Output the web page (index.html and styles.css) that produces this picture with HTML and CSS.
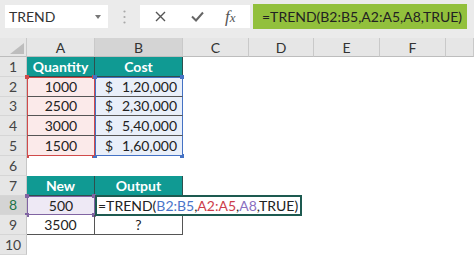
FILE: index.html
```html
<!DOCTYPE html>
<html>
<head>
<meta charset="utf-8">
<link rel="stylesheet" href="styles.css">
</head>
<body>
<div class="app">
  <div class="toolbar">
    <div class="namebox">
      <span>TREND</span>
      <svg class="caret" width="6" height="4" viewBox="0 0 6 4"><path d="M0 0h6L3 4z" fill="#777"/></svg>
    </div>
    <div class="grip">
      <svg width="3" height="14" viewBox="0 0 3 14"><circle cx="1.5" cy="1.5" r="1.1" fill="#a8a8a8"/><circle cx="1.5" cy="7" r="1.1" fill="#a8a8a8"/><circle cx="1.5" cy="12.5" r="1.1" fill="#a8a8a8"/></svg>
    </div>
    <div class="fxbox">
      <svg class="ico-x" width="11" height="11" viewBox="0 0 11 11"><path d="M1 1l9 9M10 1l-9 9" stroke="#555" stroke-width="1.4" fill="none"/></svg>
      <svg class="ico-ok" width="13" height="11" viewBox="0 0 13 11"><path d="M1 5.5l4 4L12 1.5" stroke="#666" stroke-width="2" fill="none"/></svg>
      <span class="fx">f<span class="fxx">x</span></span>
    </div>
    <div class="formula">=TREND(B2:B5,A2:A5,A8,TRUE)</div>
  </div>

  <div class="sheet">
    <div class="corner"><svg width="14" height="11" viewBox="0 0 14 11"><path d="M14 0v11H0z" fill="#bdbdbd"/></svg></div>
    <div class="ch">A</div>
    <div class="ch sel">B</div>
    <div class="ch">C</div>
    <div class="ch">D</div>
    <div class="ch">E</div>
    <div class="ch">F</div>
    <div class="ch"></div>

    <div class="rh">1</div>
    <div class="teal">Quantity</div>
    <div class="teal">Cost</div>
    <div></div><div></div><div></div><div></div><div></div>

    <div class="rh">2</div>
    <div class="ra top">1000</div>
    <div class="rb top"><span>$</span><span>1,20,000</span></div>
    <div></div><div></div><div></div><div></div><div></div>

    <div class="rh">3</div>
    <div class="ra">2500</div>
    <div class="rb"><span>$</span><span>2,30,000</span></div>
    <div></div><div></div><div></div><div></div><div></div>

    <div class="rh">4</div>
    <div class="ra">3000</div>
    <div class="rb"><span>$</span><span>5,40,000</span></div>
    <div></div><div></div><div></div><div></div><div></div>

    <div class="rh">5</div>
    <div class="ra last">1500</div>
    <div class="rb last"><span>$</span><span>1,60,000</span></div>
    <div></div><div></div><div></div><div></div><div></div>

    <div class="rh">6</div>
    <div></div><div></div><div></div><div></div><div></div><div></div><div></div>

    <div class="rh">7</div>
    <div class="teal">New</div>
    <div class="teal">Output</div>
    <div></div><div></div><div></div><div></div><div></div>

    <div class="rh sel">8</div>
    <div class="rp">500</div>
    <div class="edit"><div class="editbox">=TREND(<span class="cb">B2:B5</span>,<span class="cr">A2:A5</span>,<span class="cp">A8</span>,TRUE)</div></div>
    <div></div><div></div><div></div>

    <div class="rh">9</div>
    <div class="plain">3500</div>
    <div class="plain">?</div>
    <div></div><div></div><div></div><div></div><div></div>

    <div class="rh">10</div>
    <div></div><div></div><div></div><div></div><div></div><div></div><div></div>
  </div>
</div>
</body>
</html>
```

FILE: styles.css
```css
html, body {
  margin: 0;
  padding: 0;
  background: #fff;
}
body {
  width: 474px;
  height: 255px;
  overflow: hidden;
  font-family: Lato, "Open Sans", sans-serif;
  color: #222;
}
.toolbar {
  display: flex;
  align-items: flex-start;
  height: 38px;
  box-sizing: border-box;
  padding: 5px 0 0 5px;
  background: #ebebeb;
}
.namebox {
  width: 103px;
  height: 23px;
  box-sizing: border-box;
  background: #fff;
  display: flex;
  align-items: center;
  justify-content: space-between;
  padding: 0 7px 0 4px;
  font-size: 14px;
  color: #333;
}
.caret { margin-top: 1px; }
.grip {
  width: 32px;
  display: flex;
  justify-content: center;
  padding-top: 5px;
}
.fxbox {
  width: 110px;
  height: 23px;
  background: #fff;
  display: flex;
  align-items: center;
}
.ico-x { margin-left: 15px; }
.ico-ok { margin-left: 25px; }
.fx {
  margin-left: 21px;
  font-family: "Liberation Serif", serif;
  font-style: italic;
  font-size: 17px;
  color: #555;
}
.fxx { font-size: 13px; }
.formula {
  margin-left: 3px;
  margin-top: -1px;
  width: 214px;
  height: 25px;
  box-sizing: border-box;
  padding-left: 9px;
  background: #92c03c;
  font-size: 14px;
  line-height: 25px;
  color: #222;
  white-space: nowrap;
}

.sheet {
  display: grid;
  grid-template-columns: 27px 68px 88px 66px 65px 66px 66px 1fr;
  grid-template-rows: 19px repeat(10, 19.8px);
  font-size: 14px;
}
.sheet > div {
  box-sizing: border-box;
  display: flex;
  align-items: center;
  justify-content: center;
  white-space: nowrap;
  position: relative;
}
.corner {
  background: #e6e6e6;
  border-right: 1px solid #c9c9c9;
  border-bottom: 1px solid #bdbdbd;
  align-items: flex-end !important;
  justify-content: flex-end !important;
  padding: 0 2px 2px 0;
}
.ch {
  background: #e6e6e6;
  border-right: 1px solid #c9c9c9;
  border-bottom: 1px solid #bdbdbd;
  color: #333;
}
.ch.sel { background: #d4d4d4; }
.rh {
  background: #e6e6e6;
  border-right: 1px solid #c6c6c6;
  border-bottom: 1px solid #d6d6d6;
  color: #444;
}
.rh.sel {
  background: #d4d4d4;
  color: #217346;
}
.teal {
  background: #109a93;
  color: #fff;
  font-weight: 700;
  border-right: 1px solid #2f4f4d;
  border-bottom: 1px solid #2f4f4d;
}
.ra {
  background: #fbeaea;
  border-left: 1px solid #d04a4a;
  border-right: 1px solid #d04a4a;
  border-bottom: 1px solid #555;
}
.rb {
  background: #e9eff9;
  border-left: 1px solid #4472c4;
  border-right: 1px solid #4472c4;
  border-bottom: 1px solid #555;
  justify-content: space-between !important;
  padding: 0 5px 0 9px;
}
.ra.top { border-top: 1px solid #d04a4a; }
.rb.top { border-top: 1px solid #4472c4; }
.ra.last { border-bottom: 1px solid #d04a4a; }
.rb.last { border-bottom: 1px solid #4472c4; }

.ra.top::after, .rb.top::after, .rp::after {
  content: "";
  position: absolute;
  top: -3px;
  left: -3px;
  width: 4px;
  height: 4px;
}
.ra.top::after {
  background: #d04a4a;
  box-shadow: 67px 0 #d04a4a, 0 79px #d04a4a, 67px 79px #d04a4a;
}
.rb.top::after {
  background: #4472c4;
  box-shadow: 87px 0 #4472c4, 0 79px #4472c4, 87px 79px #4472c4;
}
.rp {
  background: #eee9f5;
  border: 1px solid #8064a2;
}
.rp::after {
  background: #8064a2;
  box-shadow: 67px 0 #8064a2, 0 19px #8064a2, 67px 19px #8064a2;
}
.edit {
  grid-column: span 3;
  justify-content: flex-start !important;
  align-items: stretch !important;
  z-index: 2;
}
.editbox {
  margin-top: -1px;
  height: 21px;
  box-sizing: border-box;
  border: 2px solid #1d5a50;
  background: #fff;
  padding: 0 2px 0 1px;
  line-height: 17px;
  color: #222;
}
.cb { color: #4a74c9; }
.cr { color: #cc3d4a; }
.cp { color: #8a6fbf; }
.plain {
  border-right: 1px solid #555;
  border-bottom: 1px solid #555;
}
```
